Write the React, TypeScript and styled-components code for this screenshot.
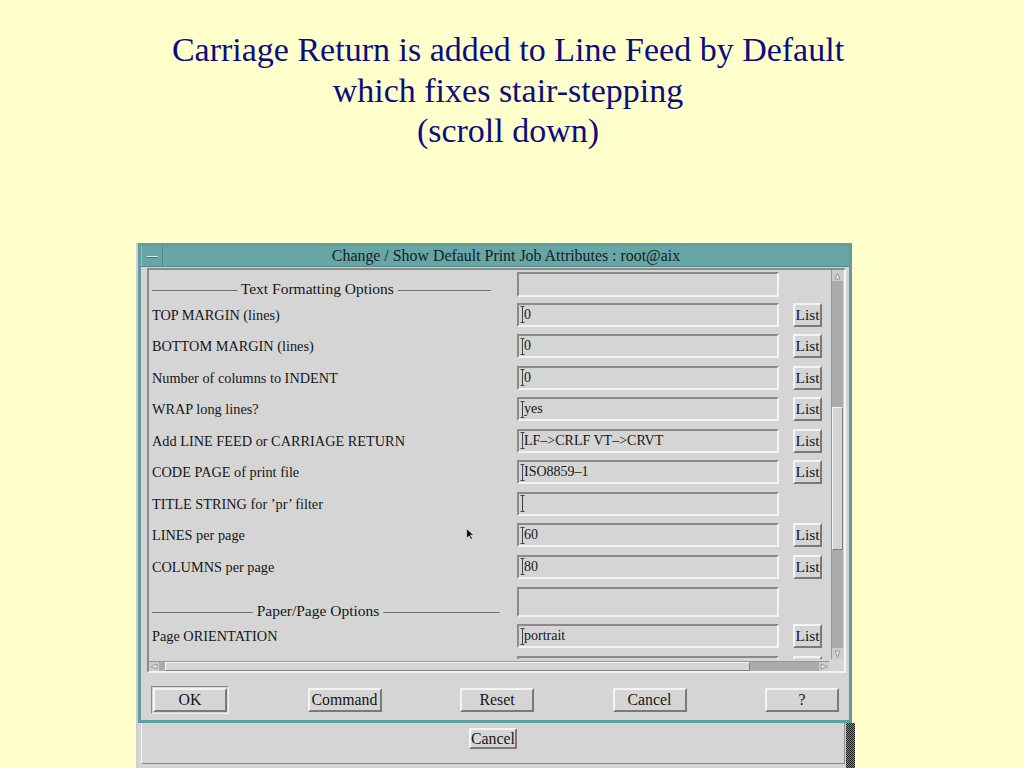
import React from 'react';
import styled, { createGlobalStyle } from 'styled-components';

const teal = '#5f9e9e';
const titleTeal = '#68a6a6';
const grey = '#d5d5d5';
const dark = '#8a8a8a';
const light = '#f4f4f4';
const trough = '#ababab';

const GlobalStyle = createGlobalStyle`
  html, body {
    margin: 0;
    padding: 0;
    background: #ffffcc;
  }
  body {
    font-family: 'Liberation Serif', 'Times New Roman', serif;
  }
`;

const Slide = styled.div`
  width: 1024px;
  height: 768px;
  overflow: hidden;
`;

const Headline = styled.h1`
  margin: 0;
  padding: 30px 8px 0 0;
  font-family: 'Liberation Serif', 'Times New Roman', serif;
  font-weight: normal;
  font-size: 34px;
  line-height: 40.5px;
  color: #0c0c80;
  text-align: center;
`;

const Shot = styled.div`
  margin: 91.5px 0 0 136px;
  width: 717px;
  border-left: 2px solid #cfcfcf;
  display: flex;
  flex-direction: column;
  color: #161616;
  font-family: 'Liberation Serif', 'Times New Roman', serif;
  font-size: 14.3px;
`;

const Dialog = styled.div`
  width: 714px;
  box-sizing: border-box;
  border: 3px solid ${teal};
  background: ${grey};
`;

const TitleBar = styled.div`
  height: 20px;
  display: flex;
  align-items: stretch;
  background: ${titleTeal};
  border-bottom: 1px solid #4f8a8a;
`;

const MenuBox = styled.div`
  width: 20px;
  border-right: 1px solid #4f8a8a;
  border-left: 1px solid #8cc0c0;
  display: flex;
  align-items: center;
  justify-content: center;
`;

const MenuBar = styled.div`
  width: 11px;
  height: 1px;
  background: #d8ecec;
  box-shadow: 0 1px 0 #3f7676;
`;

const TitleText = styled.div`
  flex: 1;
  text-align: center;
  line-height: 20px;
  font-size: 15.9px;
  color: #122222;
`;

const Body = styled.div`
  padding: 1px 3px 6px 6px;
`;

const Frame = styled.div`
  border: 2px solid;
  border-color: ${dark} ${light} ${light} ${dark};
  display: grid;
  grid-template-columns: 1fr 12px;
  grid-template-rows: 389px 12px;
  padding-right: 1px;
`;

const Content = styled.div`
  position: relative;
  overflow: hidden;
  padding-left: 3px;
`;

const Row = styled.div<{ $h?: number }>`
  height: ${({ $h }) => $h ?? 31.5}px;
  display: grid;
  grid-template-columns: 365px 262px 43px;
  align-items: center;
`;

const Label = styled.div`
  line-height: 16px;
  white-space: nowrap;
`;

const HeadingLabel = styled(Label)`
  align-self: end;
  padding-bottom: 2px;
  font-size: 15.5px;
`;

const Field = styled.div<{ $h?: number }>`
  height: ${({ $h }) => $h ?? 24}px;
  box-sizing: border-box;
  border: 2px solid;
  border-color: ${dark} ${light} ${light} ${dark};
  display: flex;
  align-items: center;
  padding-left: 1px;
  font-size: 14px;
  white-space: nowrap;
`;

const Value = styled.span`
  margin-left: -1px;
`;

const ListButton = styled.div`
  justify-self: end;
  width: 29px;
  height: 24px;
  box-sizing: border-box;
  border: 2px solid;
  border-color: ${light} #7a7a7a #7a7a7a ${light};
  display: flex;
  align-items: center;
  justify-content: center;
  font-size: 15.5px;
`;

const VScroll = styled.div`
  background: ${trough};
  display: flex;
  flex-direction: column;
  border-left: 1px solid #979797;
`;

const HScroll = styled.div`
  margin: 2px 2px 0 0;
  background: ${trough};
  display: flex;
  border-top: 1px solid #979797;
`;

const ArrowBox = styled.div<{ $v?: boolean }>`
  width: ${({ $v }) => ($v ? '100%' : '10px')};
  height: ${({ $v }) => ($v ? '11px' : '100%')};
  background: #cdcdcd;
  display: flex;
  align-items: center;
  justify-content: center;
  flex-shrink: 0;
`;

const VThumb = styled.div`
  margin-top: 126px;
  height: 143px;
  box-sizing: border-box;
  border: 1px solid;
  border-color: ${light} #7c7c7c #7c7c7c ${light};
  background: ${grey};
`;

const HThumb = styled.div`
  margin-left: 6px;
  width: 585px;
  box-sizing: border-box;
  border: 1px solid;
  border-color: ${light} #7c7c7c #7c7c7c ${light};
  background: ${grey};
`;

const Spacer = styled.div`
  flex: 1;
`;

const ButtonRow = styled.div`
  margin-top: 13px;
  height: 28px;
  padding: 0 7px 0 4px;
  display: flex;
  align-items: center;
  justify-content: space-between;
`;

const DefaultRing = styled.div`
  border: 1px solid;
  border-color: ${dark} ${light} ${light} ${dark};
  padding: 1px;
`;

const Button = styled.div<{ $w?: number; $h?: number }>`
  width: ${({ $w }) => $w ?? 74}px;
  height: ${({ $h }) => $h ?? 24}px;
  box-sizing: border-box;
  border: 2px solid;
  border-color: ${light} #7a7a7a #7a7a7a ${light};
  display: flex;
  align-items: center;
  justify-content: center;
  background: ${grey};
  font-size: 15.8px;
`;

const BackWindow = styled.div`
  height: 46px;
  display: flex;
`;

const BackBody = styled.div`
  flex: 1;
  background: ${grey};
  padding-left: 3px;
`;

const BackFrame = styled.div`
  height: 41px;
  margin-right: 1px;
  box-sizing: border-box;
  border-right: 1px solid ${dark};
  border-bottom: 1px solid ${dark};
  border-left: 1px solid ${light};
  display: flex;
  justify-content: center;
  padding-top: 5px;
`;

const Stipple = styled.div`
  width: 9px;
  background-color: #333;
  background-image: repeating-conic-gradient(#1a1a1a 0 25%, #8a8a8a 0 50%);
  background-size: 2px 2px;
`;

const Pointer = styled.svg`
  position: absolute;
  left: 317px;
  top: 258px;
`;

const IBeam = () => (
  <svg width="5" height="17" viewBox="0 0 5 17">
    <path d="M0.5 0.5h4M2.5 0.5v16M0.5 16.5h4" stroke="#444" strokeWidth="1" fill="none" />
  </svg>
);

const Tri = ({ dir }: { dir: 'up' | 'down' | 'left' | 'right' }) => {
  const pts = {
    up: '3.5,1 6,7 1,7',
    down: '1,1 6,1 3.5,7',
    left: '1,3.5 7,1 7,6',
    right: '1,1 7,3.5 1,6',
  }[dir];
  return (
    <svg width="8" height="8" viewBox="0 0 8 8">
      <polygon points={pts} fill="#e6e6e6" stroke="#8a8a8a" strokeWidth="0.8" />
    </svg>
  );
};

type Entry = { label: string; value?: string; list?: boolean };

const entries: Entry[] = [
  { label: 'TOP MARGIN (lines)', value: '0', list: true },
  { label: 'BOTTOM MARGIN (lines)', value: '0', list: true },
  { label: 'Number of columns to INDENT', value: '0', list: true },
  { label: 'WRAP long lines?', value: 'yes', list: true },
  { label: 'Add LINE FEED or CARRIAGE RETURN', value: 'LF–>CRLF VT–>CRVT', list: true },
  { label: 'CODE PAGE of print file', value: 'ISO8859–1', list: true },
  { label: 'TITLE STRING for ’pr’ filter', value: '', list: false },
  { label: 'LINES per page', value: '60', list: true },
  { label: 'COLUMNS per page', value: '80', list: true },
];

const EntryRow = ({ label, value, list }: Entry) => (
  <Row>
    <Label>{label}</Label>
    <Field>
      <IBeam />
      <Value>{value}</Value>
    </Field>
    {list ? <ListButton>List</ListButton> : <span />}
  </Row>
);

export default function App() {
  return (
    <Slide>
      <GlobalStyle />
      <Headline>
        Carriage Return is added to Line Feed by Default
        <br />
        which fixes stair-stepping
        <br />
        (scroll down)
      </Headline>

      <Shot>
        <Dialog>
          <TitleBar>
            <MenuBox>
              <MenuBar />
            </MenuBox>
            <TitleText>Change / Show Default Print Job Attributes : root@aix</TitleText>
          </TitleBar>
          <Body>
            <Frame>
              <Content>
                <Row $h={29}>
                  <HeadingLabel>––––––––––– Text Formatting Options ––––––––––––</HeadingLabel>
                  <Field $h={25} />
                  <span />
                </Row>
                {entries.map((e) => (
                  <EntryRow key={e.label} {...e} />
                ))}
                <Row $h={38}>
                  <HeadingLabel>––––––––––––– Paper/Page Options –––––––––––––––</HeadingLabel>
                  <Field $h={30} />
                  <span />
                </Row>
                <EntryRow label="Page ORIENTATION" value="portrait" list />
                <Row>
                  <Label />
                  <Field />
                  <ListButton />
                </Row>
                <Pointer width="8" height="12" viewBox="0 0 8 12">
                  <path d="M0.5 0.5v10l2.5-2.5 2 3.5 1.5-0.8-2-3.4h3.3z" fill="#111" stroke="#fff" strokeWidth="0.6" />
                </Pointer>
              </Content>
              <VScroll>
                <ArrowBox $v>
                  <Tri dir="up" />
                </ArrowBox>
                <VThumb />
                <Spacer />
                <ArrowBox $v>
                  <Tri dir="down" />
                </ArrowBox>
              </VScroll>
              <HScroll>
                <ArrowBox>
                  <Tri dir="left" />
                </ArrowBox>
                <HThumb />
                <Spacer />
                <ArrowBox>
                  <Tri dir="right" />
                </ArrowBox>
              </HScroll>
            </Frame>
            <ButtonRow>
              <DefaultRing>
                <Button>OK</Button>
              </DefaultRing>
              <Button>Command</Button>
              <Button>Reset</Button>
              <Button>Cancel</Button>
              <Button>?</Button>
            </ButtonRow>
          </Body>
        </Dialog>
        <BackWindow>
          <BackBody>
            <BackFrame>
              <Button $w={48} $h={21}>
                Cancel
              </Button>
            </BackFrame>
          </BackBody>
          <Stipple />
        </BackWindow>
      </Shot>
    </Slide>
  );
}
